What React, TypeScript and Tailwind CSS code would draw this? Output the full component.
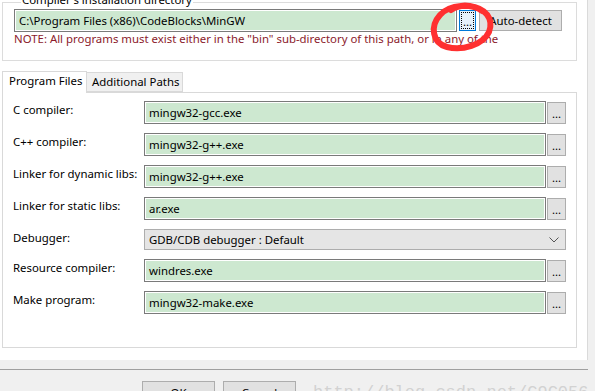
export default function App() {
  const rows = [
    { label: "C compiler:", value: "mingw32-gcc.exe" },
    { label: "C++ compiler:", value: "mingw32-g++.exe" },
    { label: "Linker for dynamic libs:", value: "mingw32-g++.exe" },
    { label: "Linker for static libs:", value: "ar.exe" },
  ];
  const rows2 = [
    { label: "Resource compiler:", value: "windres.exe" },
    { label: "Make program:", value: "mingw32-make.exe" },
  ];

  const field = (label: string, value: string) => (
    <div key={label} className="flex items-start h-[23px]">
      <div className="w-[131px] shrink-0 leading-[16px] pt-[1px] text-black whitespace-nowrap">{label}</div>
      <div className="flex-1 h-[23px] border border-[#7a7a7a] bg-[#cde8d0] shadow-[inset_0_0_0_1px_#ffffff] pl-[4px] leading-[21px] text-black">{value}</div>
      <button className="ml-[1px] w-[19px] h-[22px] mt-[1px] border border-[#adadad] bg-[#e1e1e1] text-black leading-[18px] pt-[2px]">...</button>
    </div>
  );

  return (
    <div className="relative w-[595px] h-[391px] overflow-hidden bg-[#f0f0f0] font-['Noto_Sans',sans-serif] text-[11.4px]">
      <div className="w-[588px] h-[360px] bg-white border-r border-[#dadada] pl-[2px] pr-[10px] pt-[2px]">
        {/* compiler directory group */}
        <div className="h-[59px] border border-[#dcdcdc] pl-[11px] pr-[14px]">
          <div className="-mt-[11px] ml-[7px] w-fit bg-white px-[1px] leading-[16px] text-black whitespace-nowrap">Compiler's installation directory</div>
          <div className="flex items-center mt-[1px] h-[23px]">
            <div className="w-[443px] h-[23px] border border-[#7a7a7a] bg-[#cde8d0] shadow-[inset_0_0_0_1px_#ffffff] pl-[4px] leading-[21px] text-black whitespace-nowrap">C:\Program Files (x86)\CodeBlocks\MinGW</div>
            <button className="ml-[2px] w-[17px] h-[21px] border border-[#0078d7] bg-[#e5f1fb] text-black leading-[15px] pt-[2px] outline-dotted outline-1 outline-black -outline-offset-[3px]">...</button>
            <button className="ml-[3px] w-[83px] h-[21px] border border-[#adadad] bg-[#e1e1e1] text-black leading-[19px] whitespace-nowrap">Auto-detect</button>
          </div>
          <div className="leading-[14px] h-[14px] text-[#8b1a2b] overflow-hidden w-[512px]">NOTE: All programs must exist either in the "bin" sub-directory of this path, or in any of the "Additional paths"</div>
        </div>

        {/* tabs */}
        <div className="flex items-end mt-[9px] h-[22px]">
          <div className="h-[22px] w-[85px] border border-b-0 border-[#d9d9d9] bg-white pl-[6px] leading-[18px] relative z-10 -mb-[1px] whitespace-nowrap">Program Files</div>
          <div className="h-[20px] w-[96px] border border-l-0 border-[#d9d9d9] bg-[#f0f0f0] pl-[5px] leading-[18px] whitespace-nowrap">Additional Paths</div>
        </div>
        <div className="h-[256px] border border-[#d9d9d9] bg-white pt-[8px] pl-[10px] pr-[10px] flex flex-col gap-[9px]">
          {rows.map((r) => field(r.label, r.value))}
          <div className="flex items-start h-[21px]">
            <div className="w-[131px] shrink-0 leading-[16px] pt-[1px] text-black">Debugger:</div>
            <div className="flex-1 h-[21px] border border-[#adadad] bg-[#e5e5e5] pl-[4px] flex items-center justify-between pr-[6px] text-black">
              <span>GDB/CDB debugger : Default</span>
              <svg width="10" height="6" viewBox="0 0 10 6"><path d="M0.5 0.5 L5 5 L9.5 0.5" fill="none" stroke="#555" strokeWidth="1" /></svg>
            </div>
          </div>
          {rows2.map((r) => field(r.label, r.value))}
        </div>
      </div>

      <div className="mt-[9px] w-[588px] border-t border-[#a0a0a0]"></div>
      <div className="flex items-start pl-[142px] pt-[11px]">
        <button className="w-[73px] h-[23px] border border-[#adadad] bg-[#e1e1e1] leading-[21px] text-black">OK</button>
        <button className="ml-[8px] w-[73px] h-[23px] border border-[#adadad] bg-[#e1e1e1] leading-[21px] text-black">Cancel</button>
        <div className="ml-[17px] mt-[2px] font-['Liberation_Mono',monospace] text-[17px] text-[#d2d2d2] leading-[20px] whitespace-nowrap">http://blog.csdn.net/C9C056</div>
      </div>

      {/* red hand-drawn circle marking the browse button */}
      <svg className="absolute left-0 top-0 pointer-events-none" width="595" height="391">
        <path d="M482 11 C472 3 450 4 440 15 C430 26 432 43 447 47 C462 51 483 45 489 32 C494 19 486 8 469 6 C461 5 454 8 451 10" fill="none" stroke="#ff3030" strokeWidth="6" strokeLinecap="round" strokeLinejoin="round" />
      </svg>
    </div>
  );
}
